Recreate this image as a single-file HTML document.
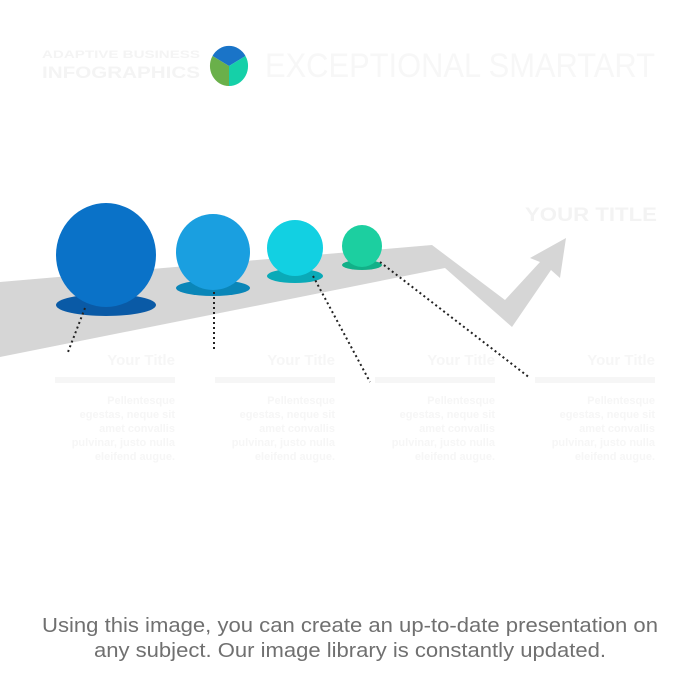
<!DOCTYPE html>
<html><head><meta charset="utf-8"><style>
html,body{margin:0;padding:0;background:#fff;width:700px;height:700px;overflow:hidden}
svg{display:block}
</style></head><body>
<svg width="700" height="700" viewBox="0 0 700 700" xmlns="http://www.w3.org/2000/svg" font-family="Liberation Sans, sans-serif">
<rect width="700" height="700" fill="#fff"/>
<text x="42" y="58" font-size="11" font-weight="bold" fill="#f4f4f4" textLength="158" lengthAdjust="spacingAndGlyphs">ADAPTIVE BUSINESS</text>
<text x="42" y="78" font-size="17" font-weight="bold" fill="#f4f4f4" textLength="158" lengthAdjust="spacingAndGlyphs">INFOGRAPHICS</text>
<g>
<path d="M229 66 L212.5 56 A19 20 0 0 1 245.5 56 Z" fill="#1a74c8"/>
<path d="M229 66 L212.5 56 A19 20 0 0 0 229 86 Z" fill="#6ab04a"/>
<path d="M229 66 L245.5 56 A19 20 0 0 1 229 86 Z" fill="#15d0a8"/>
</g>
<text x="265" y="77" font-size="34" fill="#f7f7f7" textLength="390" lengthAdjust="spacingAndGlyphs">EXCEPTIONAL SMARTART</text>
<text x="525" y="221" font-size="19" font-weight="bold" fill="#f3f3f3" textLength="132" lengthAdjust="spacingAndGlyphs">YOUR TITLE</text>
<polygon points="0,282 432,245 505,300 540,262 530,258 566,238 560,278 551,270 512,327 445,268 0,357" fill="#d6d6d6"/>
<ellipse cx="106" cy="305" rx="50" ry="11" fill="#0a5aa6"/>
<ellipse cx="106" cy="255" rx="50" ry="52" fill="#0a72c8"/>
<ellipse cx="213" cy="288" rx="37" ry="8" fill="#0a86b8"/>
<ellipse cx="213" cy="252" rx="37" ry="38" fill="#1a9fe0"/>
<ellipse cx="295" cy="276" rx="28" ry="7" fill="#0aaab8"/>
<ellipse cx="295" cy="248" rx="28" ry="28" fill="#12d0e2"/>
<ellipse cx="362" cy="265" rx="20" ry="5" fill="#12b088"/>
<ellipse cx="362" cy="246" rx="20" ry="21" fill="#1ccfa0"/>
<g stroke="#222" stroke-width="2" stroke-dasharray="2 3" fill="none">
<line x1="85" y1="308" x2="68" y2="352"/>
<line x1="214" y1="292" x2="214" y2="350"/>
<line x1="313" y1="276" x2="370" y2="382"/>
<line x1="380" y1="262" x2="530" y2="378"/>
</g>
<g fill="#f6f6f6" font-weight="bold" font-size="11" text-anchor="end">
<text x="175" y="365" font-size="15">Your Title</text>
<text x="335" y="365" font-size="15">Your Title</text>
<text x="495" y="365" font-size="15">Your Title</text>
<text x="655" y="365" font-size="15">Your Title</text>
<rect x="55" y="377" width="120" height="6"/><rect x="215" y="377" width="120" height="6"/><rect x="375" y="377" width="120" height="6"/><rect x="535" y="377" width="120" height="6"/>
<text x="175" y="404">Pellentesque</text><text x="175" y="418">egestas, neque sit</text><text x="175" y="432">amet convallis</text><text x="175" y="446">pulvinar, justo nulla</text><text x="175" y="460">eleifend augue.</text>
<text x="335" y="404">Pellentesque</text><text x="335" y="418">egestas, neque sit</text><text x="335" y="432">amet convallis</text><text x="335" y="446">pulvinar, justo nulla</text><text x="335" y="460">eleifend augue.</text>
<text x="495" y="404">Pellentesque</text><text x="495" y="418">egestas, neque sit</text><text x="495" y="432">amet convallis</text><text x="495" y="446">pulvinar, justo nulla</text><text x="495" y="460">eleifend augue.</text>
<text x="655" y="404">Pellentesque</text><text x="655" y="418">egestas, neque sit</text><text x="655" y="432">amet convallis</text><text x="655" y="446">pulvinar, justo nulla</text><text x="655" y="460">eleifend augue.</text>
</g>
<text x="350" y="632" font-size="20" fill="#707070" text-anchor="middle" textLength="616" lengthAdjust="spacingAndGlyphs">Using this image, you can create an up-to-date presentation on</text>
<text x="350" y="657" font-size="20" fill="#707070" text-anchor="middle" textLength="512" lengthAdjust="spacingAndGlyphs">any subject. Our image library is constantly updated.</text>
</svg>
</body></html>
